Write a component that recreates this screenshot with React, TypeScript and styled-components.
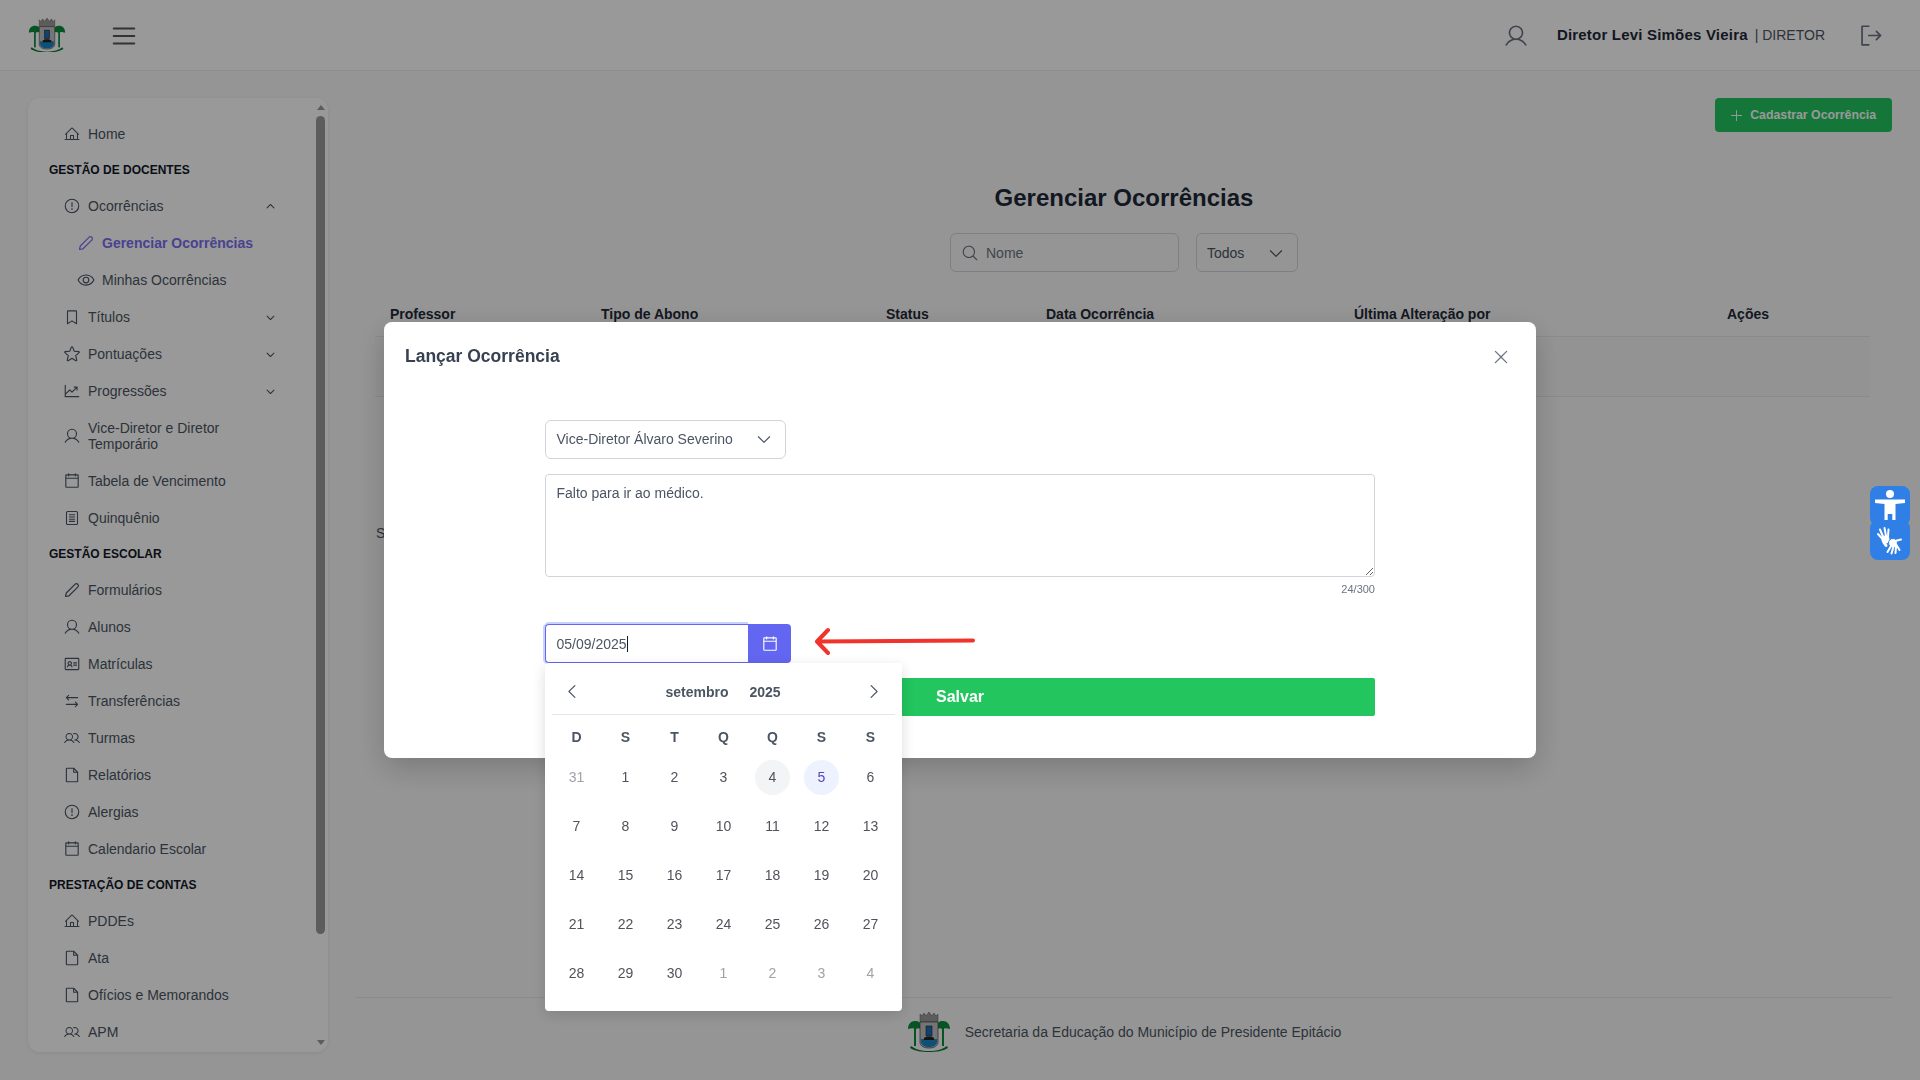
import React from "react";
import styled, { createGlobalStyle } from "styled-components";
import {
  PiArrowsLeftRight,
  PiBookmarkSimple,
  PiCalendarBlank,
  PiCaretDown,
  PiCaretDownBold,
  PiCaretLeft,
  PiCaretRight,
  PiCaretUpBold,
  PiChartLineUp,
  PiEye,
  PiFile,
  PiHouseLine,
  PiIdentificationCard,
  PiList,
  PiMagnifyingGlass,
  PiPlus,
  PiSignOut,
  PiStar,
  PiUser,
  PiUsers,
  PiWarningCircle,
  PiX,
} from "react-icons/pi";

const GlobalStyle = createGlobalStyle`
  html, body {
    margin: 0;
    height: 100%;
    overflow: hidden;
    font-family: "Liberation Sans", Arial, sans-serif;
    background: #f9f9f9;
    color: #4b5563;
  }
  * { box-sizing: border-box; }
`;

const Page = styled.div`
  width: 1920px;
  height: 1080px;
  display: flex;
  flex-direction: column;
  overflow: hidden;
`;

/* header */
const TopBar = styled.header`
  height: 71px;
  flex: none;
  display: flex;
  align-items: center;
  background: #fff;
  border-bottom: 1px solid #ececec;
  padding: 0 36px 0 28px;
`;

const MenuButton = styled.span`
  display: flex;
  margin: 2px 0 0 43px;
  font-size: 30px;
  color: #555;
`;

const UserIcon = styled.span`
  display: flex;
  margin: 1px 0 0 auto;
  font-size: 26px;
  color: #6b7280;
`;

const UserName = styled.span`
  margin: -1px 0 0 28px;
  font-size: 15px;
  font-weight: 700;
  color: #1f2937;
  letter-spacing: 0.2px;
`;

const UserRole = styled.span`
  margin: -1px 0 0 7px;
  font-size: 14px;
  color: #4b5563;
`;

const LogoutIcon = styled.span`
  display: flex;
  margin-left: 32px;
  font-size: 27px;
  color: #6b7280;
`;

const Body = styled.div`
  flex: 1;
  display: flex;
  min-height: 0;
`;

/* sidebar */
const Sidebar = styled.aside`
  position: relative;
  flex: none;
  width: 300px;
  height: 954px;
  margin: 27px 0 0 28px;
  background: #fff;
  border-radius: 12px;
  box-shadow: 0 1px 4px rgba(0, 0, 0, 0.08);
  overflow: hidden;
  padding-top: 17.5px;
`;

const SectionLabel = styled.div`
  height: 35px;
  display: flex;
  align-items: center;
  padding-left: 21px;
  font-size: 12px;
  font-weight: 700;
  color: #111827;
`;

const NavRow = styled.div<{ $sub?: boolean; $active?: boolean }>`
  display: flex;
  align-items: center;
  min-height: 37px;
  padding: 10.5px 0 10.5px ${(p) => (p.$sub ? "49px" : "35px")};
  width: 248px;
  font-size: 14px;
  line-height: 16px;
  font-weight: ${(p) => (p.$active ? 700 : 400)};
  color: ${(p) => (p.$active ? "#7a6ef0" : "#4b5563")};
`;

const NavIcon = styled.span<{ $small?: boolean }>`
  flex: none;
  display: flex;
  align-items: center;
  justify-content: center;
  width: 18px;
  height: 16px;
  margin-right: 7px;
  font-size: ${(p) => (p.$small ? "16px" : "18px")};
  color: inherit;
`;

const NavText = styled.span`
  flex: 1;
`;

const NavCaret = styled.span`
  display: flex;
  font-size: 11px;
  margin-left: 8px;
  color: #4b5563;
`;

const ScrollRail = styled.div`
  position: absolute;
  top: 0;
  right: 3px;
  bottom: 0;
  width: 9px;
  display: flex;
  flex-direction: column;
  align-items: center;
  padding: 7px 0;
`;

const ScrollArrow = styled.span<{ $down?: boolean }>`
  flex: none;
  width: 0;
  height: 0;
  border-left: 4.5px solid transparent;
  border-right: 4.5px solid transparent;
  ${(p) =>
    p.$down
      ? "border-top: 5px solid #999; margin-top: auto;"
      : "border-bottom: 5px solid #999;"}
`;

const ScrollThumb = styled.div`
  width: 9px;
  height: 818px;
  margin-top: 6px;
  border-radius: 5px;
  background: #999;
`;

/* main column */
const Main = styled.main`
  flex: 1;
  min-width: 0;
  display: flex;
  flex-direction: column;
  padding: 27px 28px 0;
`;

const ActionBar = styled.div`
  display: flex;
  justify-content: flex-end;
`;

const AddButton = styled.div`
  display: flex;
  align-items: center;
  gap: 6px;
  height: 34px;
  padding: 0 16px 0 14px;
  border-radius: 4px;
  background: #22c55e;
  color: #fff;
  font-size: 12.3px;
  font-weight: 700;
`;

const PageTitle = styled.h1`
  margin: 52px 0 0;
  text-align: center;
  font-size: 24px;
  line-height: 28px;
  font-weight: 700;
  color: #1f2937;
`;

const Filters = styled.div`
  display: flex;
  justify-content: center;
  gap: 17px;
  margin-top: 21px;
`;

const SearchBox = styled.div`
  display: flex;
  align-items: center;
  gap: 7px;
  width: 229px;
  height: 39px;
  padding: 0 10px;
  background: #f9f9f9;
  border: 1px solid #d1d5db;
  border-radius: 6px;
  font-size: 14px;
  color: #6b7280;
`;

const FilterSelect = styled.div`
  display: flex;
  align-items: center;
  justify-content: space-between;
  width: 102px;
  height: 39px;
  padding: 0 12px 0 10px;
  background: #f9f9f9;
  border: 1px solid #d1d5db;
  border-radius: 6px;
  font-size: 14px;
  color: #4b5563;
`;

const TableWrap = styled.div`
  margin: 22px 22px 0 19px;
`;

const TableHead = styled.div`
  display: grid;
  grid-template-columns: 211px 285px 160px 308px 373px 1fr;
  height: 43px;
  padding: 12px 0 0 15px;
  border-bottom: 1px solid #e5e7eb;
  font-size: 14px;
  font-weight: 700;
  color: #1f2937;
`;

const TableBand = styled.div`
  height: 60px;
  background: #f6f6f7;
  border-bottom: 1px solid #e5e7eb;
`;

const TableNote = styled.div`
  margin: 128px 0 0 1px;
  font-size: 14px;
  line-height: 16px;
  color: #4b5563;
`;

const Footer = styled.footer`
  display: flex;
  align-items: center;
  justify-content: center;
  gap: 14px;
  margin-top: auto;
  height: 83px;
  padding-bottom: 15px;
  border-top: 1px solid #e5e7eb;
  font-size: 14px;
  color: #4b5563;
`;

/* modal */
const Overlay = styled.div`
  position: fixed;
  inset: 0;
  display: flex;
  align-items: center;
  justify-content: center;
  background: rgba(0, 0, 0, 0.4);
`;

const Dialog = styled.div`
  width: 1152px;
  height: 436px;
  padding: 20px 21px;
  background: #fff;
  border-radius: 8px;
  box-shadow: 0 10px 30px rgba(0, 0, 0, 0.2);
`;

const DialogHeader = styled.div`
  display: flex;
  align-items: center;
  justify-content: space-between;
  height: 28px;
`;

const DialogTitle = styled.h2`
  margin: 0;
  font-size: 17.5px;
  font-weight: 700;
  color: #374151;
`;

const CloseIcon = styled.span`
  display: flex;
  margin: 1px 4px 0 0;
  font-size: 20px;
  color: #6b7280;
`;

const Form = styled.div`
  width: 830px;
  margin: 50px 0 0 140px;
`;

const PersonSelect = styled.div`
  display: flex;
  align-items: center;
  justify-content: space-between;
  width: 241px;
  height: 39px;
  padding: 0 12px 2px 10.5px;
  border: 1px solid #d1d5db;
  border-radius: 6px;
  font-size: 14px;
  color: #4b5563;
`;

const Notes = styled.textarea`
  display: block;
  width: 830px;
  height: 103px;
  margin-top: 15px;
  padding: 10px 10.5px;
  border: 1px solid #d1d5db;
  border-radius: 4px;
  font: 14px/16px "Liberation Sans", Arial, sans-serif;
  color: #4b5563;
  outline: none;
`;

const Counter = styled.div`
  margin-top: 5px;
  text-align: right;
  font-size: 11px;
  line-height: 14px;
  color: #6b7280;
`;

const DateRow = styled.div`
  position: relative;
  display: flex;
  align-items: center;
  width: 100%;
  margin-top: 28px;
`;

const DateField = styled.div`
  display: flex;
  align-items: center;
  width: 203px;
  height: 39px;
  padding-left: 10.5px;
  border: 1px solid #6366f1;
  border-right: 0;
  border-radius: 4px 0 0 4px;
  box-shadow: 0 -2px 0 #c7d2fe, -2px 0 0 #c7d2fe, -1px 1px 0 #c7d2fe;
  font-size: 14px;
  color: #4b5563;
`;

const Caret = styled.span`
  width: 1px;
  height: 16px;
  background: #111827;
`;

const DateButton = styled.div`
  display: flex;
  align-items: center;
  justify-content: center;
  width: 43px;
  height: 39px;
  border-radius: 0 4px 4px 0;
  background: #6366f1;
  color: #fff;
  font-size: 18px;
`;

const ArrowSlot = styled.span`
  flex: none;
  display: flex;
  margin: -4px 0 0 22px;
`;

const SaveButton = styled.div`
  display: flex;
  align-items: center;
  justify-content: center;
  height: 38px;
  margin-top: 15px;
  border-radius: 2px;
  background: #22c55e;
  color: #fff;
  font-size: 16px;
  font-weight: 700;
`;

const Popover = styled.div`
  position: absolute;
  top: 39px;
  left: 0;
  width: 357px;
  height: 348px;
  padding: 0 7px;
  background: #fff;
  border-radius: 4px;
  box-shadow: 0 4px 14px rgba(0, 0, 0, 0.14);
`;

const PopHeader = styled.div`
  display: flex;
  align-items: center;
  justify-content: space-between;
  height: 52px;
  padding: 6px 12px 0 11px;
  border-bottom: 1px solid #e5e7eb;
  color: #4b5563;
  font-size: 19px;
`;

const MonthYear = styled.div`
  display: flex;
  gap: 21px;
  font-size: 14px;
  font-weight: 700;
  color: #4b5563;
`;

const DayGrid = styled.div`
  display: grid;
  grid-template-columns: repeat(7, 49px);
`;

const WeekDay = styled.div`
  height: 37.5px;
  padding-top: 6.5px;
  display: flex;
  align-items: center;
  justify-content: center;
  font-size: 14px;
  font-weight: 700;
  color: #4b5563;
`;

const DayCell = styled.div`
  height: 49px;
  display: flex;
  align-items: center;
  justify-content: center;
`;

const Day = styled.span<{ $muted?: boolean; $tone?: "today" | "selected" }>`
  width: 35px;
  height: 35px;
  display: flex;
  align-items: center;
  justify-content: center;
  border-radius: 50%;
  font-size: 14px;
  color: ${(p) =>
    p.$tone === "selected" ? "#4f46c5" : p.$muted ? "#a1a1aa" : "#52525b"};
  background: ${(p) =>
    p.$tone === "today"
      ? "#f3f4f6"
      : p.$tone === "selected"
        ? "#eef2ff"
        : "transparent"};
`;

/* accessibility widget */
const A11yDock = styled.div`
  position: fixed;
  top: 486px;
  left: 1870px;
  display: flex;
  flex-direction: column;
`;

const A11yTile = styled.div<{ $second?: boolean }>`
  width: 40px;
  height: 40px;
  margin-top: ${(p) => (p.$second ? "-6px" : "0")};
  display: flex;
  align-items: center;
  justify-content: center;
  border-radius: 8px;
  background: #2f7fe6;
  color: #fff;
`;

const Crest = ({ width }: { width: number }) => (
  <svg width={width} viewBox="0 0 44 40" style={{ display: "block" }}>
    <rect x="7" y="12" width="2" height="22" fill="#0b8a3c" />
    <rect x="35" y="12" width="2" height="22" fill="#0b8a3c" />
    <path d="M1 17c0-5 3-8 7-8s6 2 6 5v3c-2-1-3-1-5 0-2-1-5-1-8 0z" fill="#0b8a3c" />
    <path d="M43 17c0-5-3-8-7-8s-6 2-6 5v3c2-1 3-1 5 0 2-1 5-1 8 0z" fill="#0b8a3c" />
    <path d="M13 2l2 2 2-3 2 3 3-4 3 4 2-3 2 3 2-2v8H13z" fill="#9a9a9a" stroke="#555" strokeWidth=".5" />
    <path d="M13 10h18v20c0 4-4 6-9 6s-9-2-9-6z" fill="#c4c4c4" stroke="#444" strokeWidth=".7" />
    <rect x="19" y="14" width="6" height="10" fill="#1d6fb8" stroke="#222" strokeWidth=".6" />
    <path d="M14 27h16v3c0 3-4 5-8 5s-8-2-8-5z" fill="#1a86c7" />
    <path d="M17 26c2-2 8-2 10 0v2H17z" fill="#222" />
    <path d="M4 34c4 3 10 5 18 5s14-2 18-5l1 2c-5 3-11 4-19 4S8 39 3 36z" fill="#0b7a36" />
  </svg>
);

const BodyFigure = () => (
  <svg width="32" height="34" viewBox="0 0 32 34">
    <circle cx="16" cy="5" r="4" fill="#fff" />
    <path
      d="M1 10.5h30v3.4l-9.5 1V34h-3.2v-9h-4.6v9h-3.200V14.900L1 13.900z"
      fill="#fff"
    />
  </svg>
);

// two open hands, as the sign language button shows them
const HandsFigure = () => (
  <svg width="40" height="40" viewBox="0 0 40 40" fill="none" stroke="#fff" strokeLinecap="round">
    <g strokeWidth="2">
      <path d="M10 9.500l3 7M14.500 8l1.500 8M18.500 9.500 18 16.500M8 14l4.500 5" />
    </g>
    <circle cx="15.500" cy="19.500" r="4" fill="#fff" stroke="none" />
    <path d="M14 22.500l2 3" strokeWidth="3" />
    <circle cx="23" cy="23" r="4.500" fill="#fff" stroke="#2f7fe6" strokeWidth="1" />
    <g strokeWidth="2" stroke="#fff">
      <path d="M31 19.500l-6 1.500M17.500 32l3.500-6M21.500 33.500l2-7M25.500 33l.5-6.500M29.500 30l-3-5" />
    </g>
  </svg>
);

const RedArrow = () => (
  <svg width="162" height="30" viewBox="0 0 162 30">
    <path
      d="M160 13.500 5 14.500M15 3 4 14.500 15 26"
      fill="none"
      stroke="#f0342c"
      strokeWidth="4"
      strokeLinecap="round"
      strokeLinejoin="round"
    />
  </svg>
);

const PenIcon = () => (
  <svg width="1em" height="1em" viewBox="0 0 18 18" fill="none" stroke="currentColor" strokeWidth="1.200" strokeLinejoin="round">
    <path d="m2.500 15.500.8-3.500 8.900-8.900a2 2 0 0 1 2.800 2.800L6 14.800z" />
  </svg>
);

const SheetIcon = () => (
  <svg width="1em" height="1em" viewBox="0 0 18 18" fill="none" stroke="currentColor" strokeWidth="1.100">
    <rect x="3.500" y="2.500" width="11" height="13" rx="1" />
    <path d="M6 5.800h6M6 8h6M6 10.200h6M6 12.400h6" />
  </svg>
);

type Item = {
  label: string;
  icon: React.ReactNode;
  small?: boolean;
  sub?: boolean;
  active?: boolean;
  caret?: "up" | "down";
};

type Group = { title?: string; items: Item[] };

const groups: Group[] = [
  { items: [{ label: "Home", icon: <PiHouseLine />, small: true }] },
  {
    title: "GESTÃO DE DOCENTES",
    items: [
      { label: "Ocorrências", icon: <PiWarningCircle />, caret: "up" },
      { label: "Gerenciar Ocorrências", icon: <PenIcon />, sub: true, active: true },
      { label: "Minhas Ocorrências", icon: <PiEye />, sub: true },
      { label: "Títulos", icon: <PiBookmarkSimple />, caret: "down" },
      { label: "Pontuações", icon: <PiStar />, caret: "down" },
      { label: "Progressões", icon: <PiChartLineUp />, caret: "down" },
      { label: "Vice-Diretor e Diretor Temporário", icon: <PiUser /> },
      { label: "Tabela de Vencimento", icon: <PiCalendarBlank /> },
      { label: "Quinquênio", icon: <SheetIcon /> },
    ],
  },
  {
    title: "GESTÃO ESCOLAR",
    items: [
      { label: "Formulários", icon: <PenIcon /> },
      { label: "Alunos", icon: <PiUser /> },
      { label: "Matrículas", icon: <PiIdentificationCard /> },
      { label: "Transferências", icon: <PiArrowsLeftRight /> },
      { label: "Turmas", icon: <PiUsers />, small: true },
      { label: "Relatórios", icon: <PiFile /> },
      { label: "Alergias", icon: <PiWarningCircle /> },
      { label: "Calendario Escolar", icon: <PiCalendarBlank /> },
    ],
  },
  {
    title: "PRESTAÇÃO DE CONTAS",
    items: [
      { label: "PDDEs", icon: <PiHouseLine />, small: true },
      { label: "Ata", icon: <PiFile /> },
      { label: "Ofícios e Memorandos", icon: <PiFile /> },
      { label: "APM", icon: <PiUsers />, small: true },
    ],
  },
];

const weekDays = ["D", "S", "T", "Q", "Q", "S", "S"];

type CalDay = { n: number; muted?: boolean; tone?: "today" | "selected" };

const calendarDays: CalDay[] = [
  { n: 31, muted: true },
  ...Array.from({ length: 30 }, (_, i): CalDay => ({
    n: i + 1,
    tone: i === 3 ? "today" : i === 4 ? "selected" : undefined,
  })),
  { n: 1, muted: true },
  { n: 2, muted: true },
  { n: 3, muted: true },
  { n: 4, muted: true },
];

const NavItem = ({ item }: { item: Item }) => (
  <NavRow $sub={item.sub} $active={item.active}>
    <NavIcon $small={item.small}>{item.icon}</NavIcon>
    <NavText>{item.label}</NavText>
    {item.caret && (
      <NavCaret>{item.caret === "up" ? <PiCaretUpBold /> : <PiCaretDownBold />}</NavCaret>
    )}
  </NavRow>
);

export default function App() {
  return (
    <Page>
      <GlobalStyle />
      <TopBar>
        <Crest width={38} />
        <MenuButton>
          <PiList />
        </MenuButton>
        <UserIcon>
          <PiUser />
        </UserIcon>
        <UserName>Diretor Levi Simões Vieira</UserName>
        <UserRole>| DIRETOR</UserRole>
        <LogoutIcon>
          <PiSignOut />
        </LogoutIcon>
      </TopBar>
      <Body>
        <Sidebar>
          {groups.map((group, i) => (
            <div key={i}>
              {group.title && <SectionLabel>{group.title}</SectionLabel>}
              {group.items.map((item) => (
                <NavItem key={item.label} item={item} />
              ))}
            </div>
          ))}
          <ScrollRail>
            <ScrollArrow />
            <ScrollThumb />
            <ScrollArrow $down />
          </ScrollRail>
        </Sidebar>
        <Main>
          <ActionBar>
            <AddButton>
              <PiPlus size={15} />
              Cadastrar Ocorrência
            </AddButton>
          </ActionBar>
          <PageTitle>Gerenciar Ocorrências</PageTitle>
          <Filters>
            <SearchBox>
              <PiMagnifyingGlass size={18} />
              Nome
            </SearchBox>
            <FilterSelect>
              Todos
              <PiCaretDown size={18} />
            </FilterSelect>
          </Filters>
          <TableWrap>
            <TableHead>
              <span>Professor</span>
              <span>Tipo de Abono</span>
              <span>Status</span>
              <span>Data Ocorrência</span>
              <span>Última Alteração por</span>
              <span>Ações</span>
            </TableHead>
            <TableBand />
            <TableNote>Sem registros</TableNote>
          </TableWrap>
          <Footer>
            <Crest width={44} />
            Secretaria da Educação do Município de Presidente Epitácio
          </Footer>
        </Main>
      </Body>
      <Overlay>
        <Dialog>
          <DialogHeader>
            <DialogTitle>Lançar Ocorrência</DialogTitle>
            <CloseIcon>
              <PiX />
            </CloseIcon>
          </DialogHeader>
          <Form>
            <PersonSelect>
              Vice-Diretor Álvaro Severino
              <PiCaretDown size={18} />
            </PersonSelect>
            <Notes readOnly value="Falto para ir ao médico." />
            <Counter>24/300</Counter>
            <DateRow>
              <DateField>
                05/09/2025
                <Caret />
              </DateField>
              <DateButton>
                <PiCalendarBlank />
              </DateButton>
              <ArrowSlot>
                <RedArrow />
              </ArrowSlot>
              <Popover>
                <PopHeader>
                  <PiCaretLeft />
                  <MonthYear>
                    <span>setembro</span>
                    <span>2025</span>
                  </MonthYear>
                  <PiCaretRight />
                </PopHeader>
                <DayGrid>
                  {weekDays.map((d, i) => (
                    <WeekDay key={i}>{d}</WeekDay>
                  ))}
                  {calendarDays.map((d, i) => (
                    <DayCell key={i}>
                      <Day $muted={d.muted} $tone={d.tone}>
                        {d.n}
                      </Day>
                    </DayCell>
                  ))}
                </DayGrid>
              </Popover>
            </DateRow>
            <SaveButton>Salvar</SaveButton>
          </Form>
        </Dialog>
      </Overlay>
      <A11yDock>
        <A11yTile>
          <BodyFigure />
        </A11yTile>
        <A11yTile $second>
          <HandsFigure />
        </A11yTile>
      </A11yDock>
    </Page>
  );
}
